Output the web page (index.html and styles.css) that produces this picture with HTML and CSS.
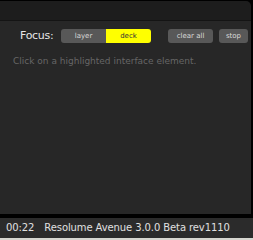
FILE: index.html
```html
<!DOCTYPE html>
<html lang="en">
<head>
    <meta charset="UTF-8">
    <title>Focus</title>
    <link rel="stylesheet" href="styles.css">
</head>
<body>
    <div class="window">
        <div class="titlebar"></div>
        <div class="panel">
            <div class="toolbar">
                <span class="focus-label">Focus:</span>
                <div class="segmented">
                    <button class="seg">layer</button>
                    <button class="seg active">deck</button>
                </div>
                <button class="btn clear">clear all</button>
                <button class="btn stop">stop</button>
            </div>
            <p class="hint">Click on a highlighted interface element.</p>
        </div>
    </div>
    <div class="statusbar">
        <span class="time">00:22</span>Resolume Avenue 3.0.0 Beta rev1110
    </div>
</body>
</html>
```

FILE: styles.css
```css
body {
    margin: 0;
    padding: 0;
    background: #000;
    font-family: "DejaVu Sans", Verdana, sans-serif;
    width: 253px;
    height: 240px;
    overflow: hidden;
}
.window {
    margin-top: 1px;
    width: 251px;
}
.titlebar {
    height: 19px;
    background: #1d1d1d;
    border-top-right-radius: 5px;
    border-bottom: 1px solid #141414;
}
.panel {
    height: 193px;
    background: #272727;
}
.toolbar {
    display: flex;
    align-items: center;
    padding: 8px 0 0 20px;
    height: 14px;
}
.focus-label {
    width: 41px;
    color: #e6e6e6;
    font-size: 11px;
    letter-spacing: -0.3px;
    line-height: 14px;
}
.segmented {
    display: flex;
    width: 90px;
    height: 14px;
    border-radius: 3px;
    overflow: hidden;
}
.seg, .btn {
    font-family: "DejaVu Sans", Verdana, sans-serif;
    font-size: 7px;
    border: none;
    margin: 0;
    padding: 0;
    height: 14px;
    background: #585858;
    color: #d8d8d8;
    cursor: pointer;
}
.seg {
    width: 45px;
}
.seg.active {
    background: #ffff00;
    color: #333;
}
.btn {
    border-radius: 3px;
}
.clear {
    width: 45px;
    margin-left: 17px;
}
.stop {
    width: 29px;
    margin-left: 6px;
}
.hint {
    margin: 13px 0 0 13px;
    font-size: 9px;
    line-height: 11px;
    color: #666;
}
.statusbar {
    margin-top: 4px;
    height: 20px;
    line-height: 20px;
    padding-left: 6px;
    background: #2b2b2b;
    color: #e0e0e0;
    font-size: 10px;
    letter-spacing: -0.1px;
    border-bottom: 2px solid #d6d6d0;
}
.time {
    margin-right: 10px;
}
```
